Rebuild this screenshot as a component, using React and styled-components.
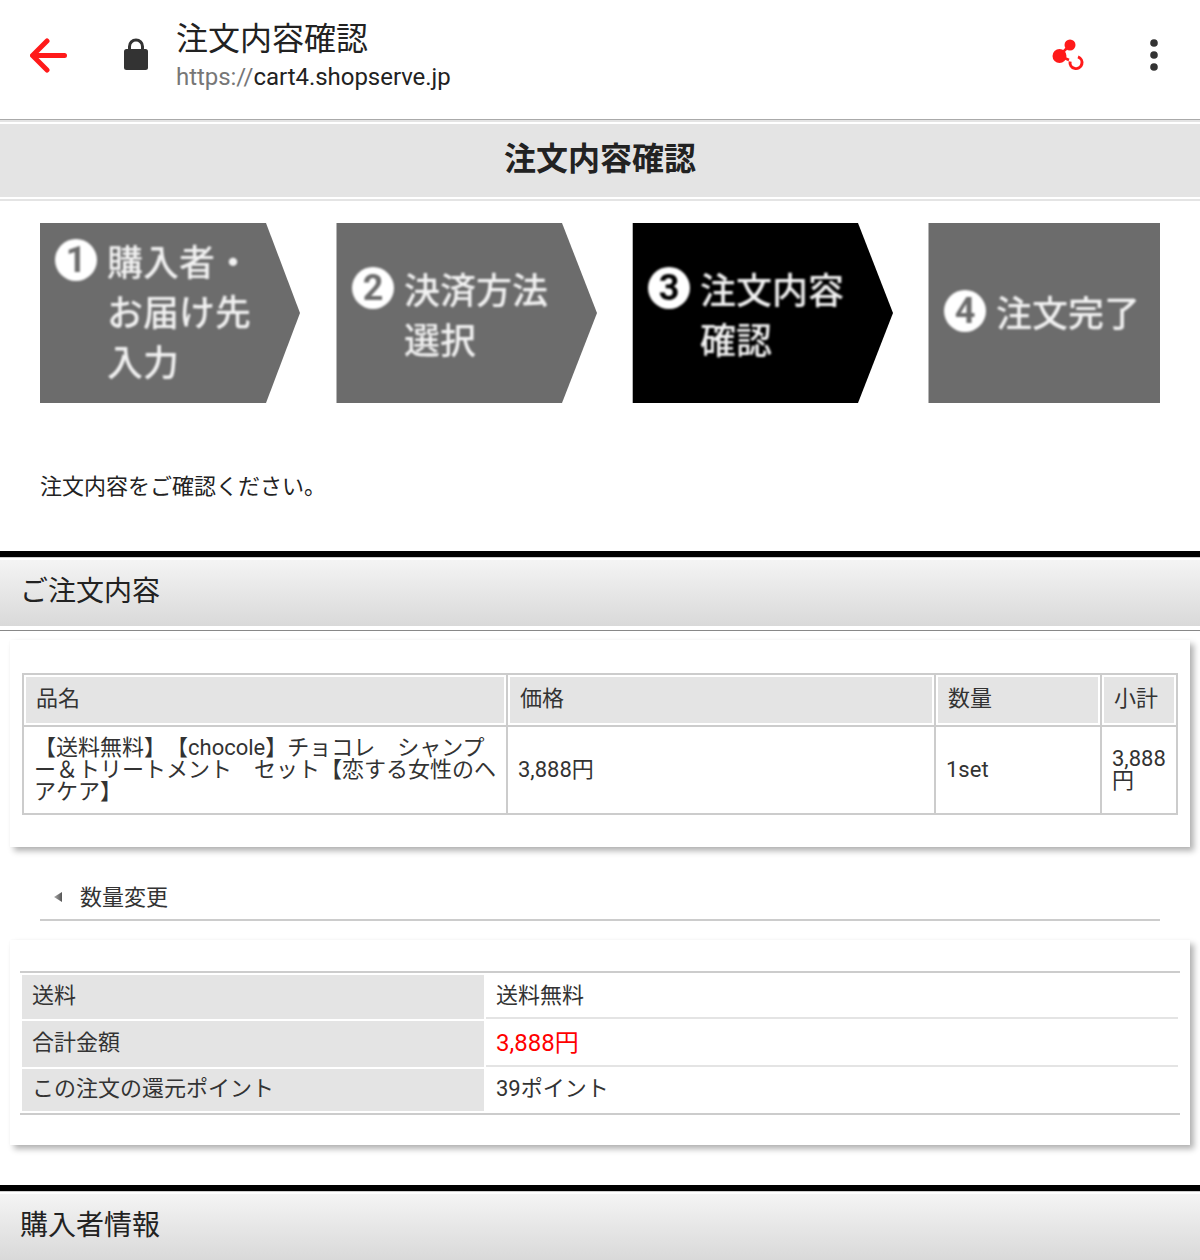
import React from 'react';
import styled, { createGlobalStyle } from 'styled-components';

const GlobalStyle = createGlobalStyle`
  html, body {
    margin: 0;
    height: 1260px;
    overflow: hidden;
    background: #fff;
  }
  body {
    font-family: Roboto, "Noto Sans CJK JP", sans-serif;
    font-size: 22px;
    color: #333;
    text-spacing-trim: space-all;
  }
`;

const Toolbar = styled.header`
  height: 117px;
  border-bottom: 1px solid #aaa;
  display: flex;
  align-items: center;
  padding: 0 42px 2px 30px;
`;

const BackIcon = styled.svg`
  width: 38px;
  height: 36px;
  margin: 0 56px 5px 0;
`;

const LockIcon = styled.svg`
  width: 24px;
  height: 32px;
  margin: 0 28px 9px 0;
`;

const PageInfo = styled.div`
  flex: 1;
  margin-bottom: 2px;
`;

const PageName = styled.div`
  font-size: 32px;
  line-height: 38px;
  color: #222;
`;

const PageUrl = styled.div`
  font-size: 24px;
  line-height: 38px;
  letter-spacing: -0.04px;
  color: #222;
  span {
    color: #777;
  }
`;

const ShareIcon = styled.svg`
  width: 34px;
  height: 34px;
  margin: 0 64px 7px 0;
`;

const MoreIcon = styled.svg`
  width: 8px;
  height: 32px;
  margin-bottom: 7px;
`;

const PageTitle = styled.h1`
  margin: 0;
  height: 73px;
  line-height: 70px;
  padding: 2px 0;
  border-top: 2px solid #e4e4e4;
  border-bottom: 2px solid #e4e4e4;
  background: #e4e4e4;
  background-clip: content-box;
  text-align: center;
  font-size: 32px;
  font-weight: 700;
  color: #222;
`;

const Steps = styled.ol`
  list-style: none;
  margin: 22px 40px 0;
  padding: 0;
  display: grid;
  grid-template-columns: 296px 296px 296px 232px;
`;

const Step = styled.li`
  width: ${p => p.$width}px;
  height: 180px;
  box-sizing: border-box;
  display: flex;
  align-items: center;
  padding: ${p => p.$nudge}px 0 0 15px;
  background: ${p => (p.$current ? '#000' : '#6c6c6c')};
  border-left: ${p => (p.$first ? 'none' : '1px solid #b5b5b5')};
  clip-path: ${p =>
    p.$last ? 'none' : 'polygon(0 0, 226px 0, 100% 50%, 226px 100%, 0 100%)'};
`;

const StepInner = styled.div`
  display: flex;
  align-items: flex-start;
  gap: 10px;
  filter: blur(0.8px);
`;

const StepNumber = styled.span`
  flex: none;
  width: 42px;
  height: 42px;
  border-radius: 50%;
  background: #fff;
  color: ${p => (p.$current ? '#000' : '#6c6c6c')};
  font-size: 36px;
  font-weight: 700;
  line-height: 42px;
  text-align: center;
`;

const StepText = styled.div`
  font-size: 36px;
  font-weight: 500;
  line-height: 50px;
  color: #f2f2f2;
  white-space: pre;
`;

const Intro = styled.p`
  margin: 0;
  padding: 70px 40px 50px;
  font-size: 22px;
  line-height: 28px;
  color: #222;
`;

const SectionHead = styled.div`
  border-top: 6px solid #000;
  border-bottom: 1px solid #888;
  padding: 3px 0 4px;
  margin-top: ${p => p.$top || 0}px;
  box-shadow: inset 0 1px 0 #ccc;
`;

const SectionBar = styled.h2`
  margin: 0;
  height: 66px;
  padding: 0 20px;
  background: linear-gradient(#f4f4f4, #d9d9d9);
  font-size: 28px;
  font-weight: 400;
  line-height: 64px;
  color: #222;
`;

const Card = styled.section`
  margin: ${p => p.$top}px 10px 0;
  padding: ${p => p.$pad};
  background: #fff;
  box-shadow: 4px 4px 6px rgba(0, 0, 0, 0.3), 0 0 2px rgba(0, 0, 0, 0.03);
`;

const OrderTable = styled.table`
  width: 1156px;
  table-layout: fixed;
  border-collapse: collapse;
`;

const OrderCol = styled.col`
  width: ${p => p.$width}px;
`;

const OrderHead = styled.th`
  height: 50px;
  padding: 0 12px;
  border: 2px solid #ccc;
  background: #e4e4e4;
  box-shadow: inset 0 0 0 2px #fff;
  font-weight: 400;
  line-height: 48px;
  text-align: left;
  vertical-align: top;
`;

const OrderCell = styled.td`
  height: 86px;
  padding: 0 10px;
  border: 2px solid #ccc;
  line-height: 22px;
  line-break: anywhere;
`;

const BackLink = styled.div`
  margin: 28px 40px 0;
  height: 40px;
  padding: 0 0 4px 14px;
  display: flex;
  align-items: center;
  gap: 18px;
  border-bottom: 2px solid #ccc;
`;

const BackMark = styled.span`
  width: 8px;
  height: 10px;
  margin-top: 4px;
  background: linear-gradient(90deg, #aaa, #555);
  clip-path: polygon(100% 0, 100% 100%, 0 50%);
`;

const SummaryTable = styled.table`
  width: 1160px;
  table-layout: fixed;
  border-collapse: separate;
  border-spacing: 2px;
  border-top: 2px solid #ccc;
  border-bottom: 2px solid #ccc;
`;

const SummaryCol = styled.col`
  width: ${p => p.$width}px;
`;

const SummaryHead = styled.th`
  height: ${p => p.$height}px;
  padding: 0 10px;
  background: #e4e4e4;
  font-weight: 400;
  line-height: ${p => p.$height - 2}px;
  text-align: left;
  vertical-align: top;
`;

const SummaryCell = styled.td`
  padding: 0 10px;
  border-bottom: ${p => (p.$last ? 'none' : '2px solid #e4e4e4')};
  color: ${p => (p.$price ? '#f00' : '#333')};
  font-size: ${p => (p.$price ? 24 : 22)}px;
  line-height: ${p => p.$height - 2}px;
  vertical-align: top;
`;

const steps = [
  { no: 1, width: 260, nudge: 2, text: '購入者・\nお届け先\n入力' },
  { no: 2, width: 261, nudge: 7, text: '決済方法\n選択' },
  { no: 3, width: 261, nudge: 7, text: '注文内容\n確認', current: true },
  { no: 4, width: 232, nudge: 4, text: '注文完了', last: true },
];

const summary = [
  { label: '送料', value: '送料無料', height: 44 },
  { label: '合計金額', value: '3,888円', height: 46, price: true },
  { label: 'この注文の還元ポイント', value: '39ポイント', height: 42, last: true },
];

export default function App() {
  return (
    <>
      <GlobalStyle />
      <Toolbar>
        <BackIcon viewBox="30 38 38 36" fill="none" stroke="#ff1a1a" strokeWidth="5" strokeLinecap="round" strokeLinejoin="round">
          <path d="M64.500 55.500H33M47 41 32.500 55.500 47 70" />
        </BackIcon>
        <LockIcon viewBox="0 0 24 32">
          <path fill="none" stroke="#333" strokeWidth="3" d="M5.500 13V8.500a6.500 6.500 0 0 1 13 0V13" />
          <rect y="11" width="24" height="21" rx="2.500" fill="#333" />
        </LockIcon>
        <PageInfo>
          <PageName>注文内容確認</PageName>
          <PageUrl><span>https://</span>cart4.shopserve.jp</PageUrl>
        </PageInfo>
        <ShareIcon viewBox="1052 38 34 34" fill="#ff1a1a">
          <circle cx="1070" cy="45" r="5.500" />
          <circle cx="1059.500" cy="56" r="7" />
          <path d="M1060 55 1070 45M1060 56 1069 60" stroke="#ff1a1a" strokeWidth="2.500" />
          <path d="M1078 56.900A6 6 0 1 1 1070.100 61.500" fill="none" stroke="#ff1a1a" strokeWidth="3" />
        </ShareIcon>
        <MoreIcon viewBox="0 0 8 32" fill="#333">
          <circle cx="4" cy="4" r="3.800" />
          <circle cx="4" cy="16" r="3.800" />
          <circle cx="4" cy="28" r="3.800" />
        </MoreIcon>
      </Toolbar>

      <PageTitle>注文内容確認</PageTitle>

      <Steps>
        {steps.map((s, i) => (
          <Step key={s.no} $width={s.width} $nudge={s.nudge} $current={s.current} $last={s.last} $first={i === 0}>
            <StepInner>
              <StepNumber $current={s.current}>{s.no}</StepNumber>
              <StepText>{s.text}</StepText>
            </StepInner>
          </Step>
        ))}
      </Steps>

      <Intro>注文内容をご確認ください。</Intro>

      <SectionHead>
        <SectionBar>ご注文内容</SectionBar>
      </SectionHead>

      <Card $top={9} $pad="33px 12px 32px">
        <OrderTable>
          <colgroup>
            <OrderCol $width={484} />
            <OrderCol $width={428} />
            <OrderCol $width={166} />
            <OrderCol $width={76} />
          </colgroup>
          <thead>
            <tr>
              <OrderHead>品名</OrderHead>
              <OrderHead>価格</OrderHead>
              <OrderHead>数量</OrderHead>
              <OrderHead>小計</OrderHead>
            </tr>
          </thead>
          <tbody>
            <tr>
              <OrderCell>【送料無料】【chocole】チョコレ　シャンプー＆トリートメント　セット【恋する女性のヘアケア】</OrderCell>
              <OrderCell>3,888円</OrderCell>
              <OrderCell>1set</OrderCell>
              <OrderCell>3,888円</OrderCell>
            </tr>
          </tbody>
        </OrderTable>
      </Card>

      <BackLink>
        <BackMark />
        数量変更
      </BackLink>

      <Card $top={19} $pad="31px 10px 30px">
        <SummaryTable>
          <colgroup>
            <SummaryCol $width={462} />
            <SummaryCol />
          </colgroup>
          <tbody>
            {summary.map(row => (
              <tr key={row.label}>
                <SummaryHead $height={row.height}>{row.label}</SummaryHead>
                <SummaryCell $height={row.height} $price={row.price} $last={row.last}>{row.value}</SummaryCell>
              </tr>
            ))}
          </tbody>
        </SummaryTable>
      </Card>

      <SectionHead $top={40}>
        <SectionBar>購入者情報</SectionBar>
      </SectionHead>
    </>
  );
}
